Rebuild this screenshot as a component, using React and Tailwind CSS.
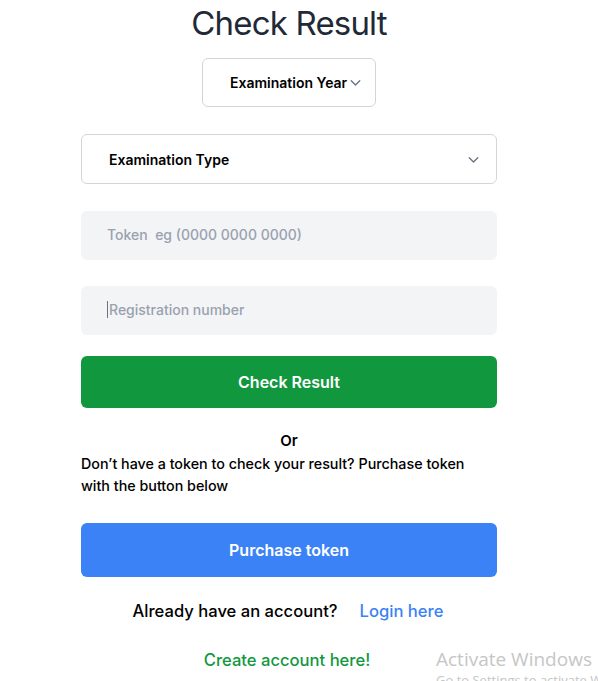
function Chevron({ className }) {
  return (
    <svg className={className} viewBox="0 0 20 20" fill="none" stroke="currentColor" strokeWidth="1.6" strokeLinecap="round" strokeLinejoin="round">
      <path d="M5 8l5 5 5-5" />
    </svg>
  );
}

export default function App() {
  return (
    <div className="relative min-h-[681px] bg-white font-['Inter',sans-serif] text-black overflow-hidden">
      <div className="ml-[81px] w-[416px] flex flex-col">
        <h1 className="text-center text-[33px] leading-[46px] text-[#1f2937] font-normal tracking-tight">Check Result</h1>

        <div className="mt-[12px] self-center w-[174px] h-[49px] border border-gray-300 rounded-md flex items-center pl-[27px] text-[14px] font-semibold whitespace-nowrap">
          <span>Examination Year</span>
          <Chevron className="w-[17px] h-[17px] text-gray-500 shrink-0" />
        </div>

        <div className="mt-[27px] h-[50px] border border-gray-300 rounded-md flex items-center justify-between pl-[27px] pr-[14px] text-[14px] font-semibold">
          <span>Examination Type</span>
          <Chevron className="w-[17px] h-[17px] text-gray-500" />
        </div>

        <input
          className="mt-[27px] h-[49px] bg-gray-100 rounded-md px-[26px] pb-[3px] text-[14px] font-medium placeholder:text-gray-400 outline-none"
          placeholder="Token  eg (0000 0000 0000)"
        />

        <div className="mt-[26px] h-[49px] bg-gray-100 rounded-md pl-[26px] pb-[2px] flex items-center text-[14px] font-medium text-gray-400">
          <span className="w-px h-[17px] bg-gray-500 mr-[1px]" />
          <span>Registration number</span>
        </div>

        <button className="mt-[21px] h-[52px] bg-[#11983f] rounded-md text-white text-[16px] font-semibold">Check Result</button>

        <p className="mt-[23px] text-center text-[15px] font-semibold leading-[20px]">Or</p>
        <p className="mt-[2px] text-[14.3px] font-medium leading-[22px]">
          Don’t have a token to check your result? Purchase token with the button below
        </p>

        <button className="mt-[26px] h-[54px] bg-[#3b82f6] rounded-md text-white text-[16px] font-semibold">Purchase token</button>

        <div className="mt-[23px] flex justify-center gap-[22px] text-[16.6px] font-medium leading-[22px] pr-[2px]">
          <span>Already have an account?</span>
          <span className="text-[#3b82f6]">Login here</span>
        </div>

        <p className="mt-[27px] text-center text-[16.6px] font-medium leading-[22px] text-[#11983f] pr-[4px]">Create account here!</p>
      </div>

      <div className="absolute left-[436px] top-[648px] font-['Open_Sans',sans-serif] text-[#c6c6c6] leading-tight whitespace-nowrap">
        <div className="text-[19px]">Activate Windows</div>
        <div className="text-[13px]">Go to Settings to activate Windows.</div>
      </div>
    </div>
  );
}
